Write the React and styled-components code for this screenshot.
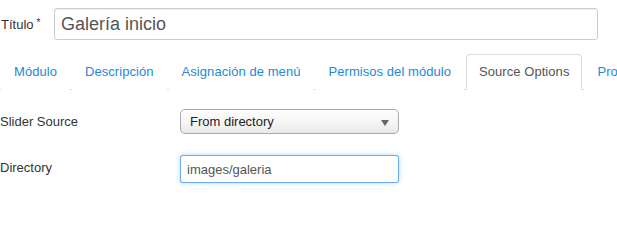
import React from 'react';
import styled, { createGlobalStyle } from 'styled-components';

const GlobalStyle = createGlobalStyle`
  html, body {
    margin: 0;
    padding: 0;
    background: #fff;
    overflow: hidden;
  }
  body {
    font-family: "Liberation Sans", Arial, sans-serif;
    font-size: 13px;
    color: #333;
  }
`;

const Page = styled.div`
  width: 617px;
  height: 247px;
  overflow: hidden;
  padding-top: 8px;
  box-sizing: border-box;
`;

const TitleRow = styled.div`
  display: flex;
  align-items: center;
`;

const TitleLabel = styled.label`
  width: 54px;
  flex-shrink: 0;
  font-size: 13px;
  color: #333;
  padding-left: 1px;
  box-sizing: border-box;
`;

const Star = styled.span`
  font-size: 10px;
  vertical-align: 3px;
  margin-left: 3px;
`;

const TitleInput = styled.input`
  width: 544px;
  height: 32px;
  box-sizing: border-box;
  border: 1px solid #ccc;
  border-radius: 3px;
  padding: 4px 6px;
  font-family: inherit;
  font-size: 18px;
  color: #555;
  outline: none;
  box-shadow: inset 0 1px 1px rgba(0, 0, 0, 0.06);
`;

const Tabs = styled.ul`
  display: flex;
  flex-wrap: nowrap;
  white-space: nowrap;
  list-style: none;
  margin: 14px 0 0;
  padding: 0 0 0 1px;
  border-bottom: 1px solid #ddd;
  width: 800px;
`;

const Tab = styled.li`
  margin-right: 2px;
  margin-bottom: -1px;
  padding: 8px 12px;
  line-height: 18px;
  font-size: 13px;
  letter-spacing: 0.06px;
  border: 1px solid ${(p) => (p.$active ? '#ddd' : 'transparent')};
  border-bottom-color: ${(p) => (p.$active ? '#fff' : 'transparent')};
  border-radius: 4px 4px 0 0;
  background: #fff;
  color: ${(p) => (p.$active ? '#555' : '#2489d6')};
`;

const TabContent = styled.div`
  padding-top: 19px;
`;

const ControlGroup = styled.div`
  display: flex;
  align-items: flex-start;
  margin-bottom: 18px;
`;

const ControlLabel = styled.label`
  width: 180px;
  flex-shrink: 0;
  padding-top: 4px;
  line-height: 18px;
  font-size: 13px;
  color: #333;
`;

const SelectBox = styled.div`
  position: relative;
  width: 219px;
  height: 25px;
  box-sizing: border-box;
  border: 1px solid #aaa;
  border-radius: 5px;
  background: linear-gradient(#fdfdfd, #f6f6f6 50%, #e9e9e9);
  padding: 0 0 0 9px;
  line-height: 23px;
  font-size: 13px;
  color: #222;
  margin-bottom: 3px;
`;

const Caret = styled.span`
  position: absolute;
  right: 9px;
  top: 10px;
  width: 0;
  height: 0;
  border-left: 4px solid transparent;
  border-right: 4px solid transparent;
  border-top: 6px solid #666;
`;

const TextInput = styled.input`
  width: 219px;
  height: 28px;
  box-sizing: border-box;
  border: 1px solid rgba(82, 160, 236, 0.85);
  border-radius: 3px;
  padding: 4px 6px;
  font-family: inherit;
  font-size: 13px;
  color: #555;
  outline: none;
  box-shadow: 0 0 5px rgba(82, 168, 236, 0.45);
`;

const tabs = [
  'Módulo',
  'Descripción',
  'Asignación de menú',
  'Permisos del módulo',
  'Source Options',
  'Propiedades',
];

export default function App() {
  return (
    <Page>
      <GlobalStyle />
      <TitleRow>
        <TitleLabel>
          Título<Star>*</Star>
        </TitleLabel>
        <TitleInput defaultValue="Galería inicio" />
      </TitleRow>

      <Tabs>
        {tabs.map((t) => (
          <Tab key={t} $active={t === 'Source Options'}>
            {t}
          </Tab>
        ))}
      </Tabs>

      <TabContent>
        <ControlGroup>
          <ControlLabel>Slider Source</ControlLabel>
          <SelectBox>
            From directory
            <Caret />
          </SelectBox>
        </ControlGroup>
        <ControlGroup>
          <ControlLabel>Directory</ControlLabel>
          <TextInput defaultValue="images/galeria" />
        </ControlGroup>
      </TabContent>
    </Page>
  );
}
